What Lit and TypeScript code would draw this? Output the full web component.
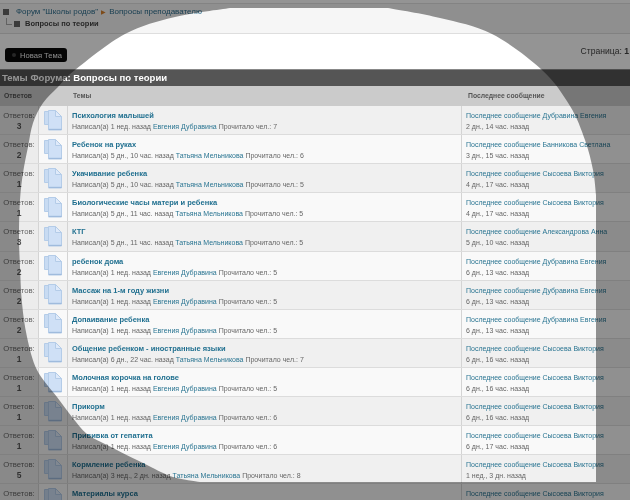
import { LitElement, html, css, svg } from "lit";
import { customElement } from "lit/decorators.js";

const D = "Евгения Дубравина";
const T = "Татьяна Мельникова";
const S = "Сысоева Виктория";
const E = "Дубравина Евгения";
const rows: [string, number, string, string, number, string, string][] = [
  ["Психология малышей", 3, "1 нед.", D, 7, E, "2 дн., 14 час."],
  ["Ребенок на руках", 2, "5 дн., 10 час.", T, 6, "Банникова Светлана", "3 дн., 15 час."],
  ["Укачивание ребенка", 1, "5 дн., 10 час.", T, 5, S, "4 дн., 17 час."],
  ["Биологические часы матери и ребенка", 1, "5 дн., 11 час.", T, 5, S, "4 дн., 17 час."],
  ["КТГ", 3, "5 дн., 11 час.", T, 5, "Александрова Анна", "5 дн., 10 час."],
  ["ребенок дома", 2, "1 нед.", D, 5, E, "6 дн., 13 час."],
  ["Массаж на 1-м году жизни", 2, "1 нед.", D, 5, E, "6 дн., 13 час."],
  ["Допаивание ребенка", 2, "1 нед.", D, 5, E, "6 дн., 13 час."],
  ["Общение ребенком - иностранные языки", 1, "6 дн., 22 час.", T, 7, S, "6 дн., 16 час."],
  ["Молочная корочка на голове", 1, "1 нед.", D, 5, S, "6 дн., 16 час."],
  ["Прикорм", 1, "1 нед.", D, 6, S, "6 дн., 16 час."],
  ["Прививка от гепатита", 1, "1 нед.", D, 6, S, "6 дн., 17 час."],
  ["Кормление ребенка", 5, "3 нед., 2 дн.", T, 8, S, "1 нед., 3 дн."],
  ["Материалы курса", 1, "3 нед., 2 дн.", T, 8, S, "1 нед., 3 дн."],
];

const pts: [number, number][] = [
  [388, 8], [440, 18], [492, 34], [542, 70], [570, 106], [585, 140], [593, 170], [596, 195],
];
const leftPts: [number, number][] = [
  [200, 482], [173, 477], [147, 465], [107, 445], [87, 434], [72, 417], [57, 397], [37, 370], [27, 337],
  [22, 303], [20, 267], [19, 235], [20, 200], [23, 173], [28, 147], [33, 123], [43, 103], [58, 87],
  [75, 70], [125, 34], [175, 17], [230, 8],
];
function spline(p: [number, number][]) {
  let d = "";
  for (let i = 0; i < p.length - 1; i++) {
    const a = p[Math.max(0, i - 1)], b = p[i], c = p[i + 1], e = p[Math.min(p.length - 1, i + 2)];
    d += `C${b[0] + (c[0] - a[0]) / 6} ${b[1] + (c[1] - a[1]) / 6} ${c[0] - (e[0] - b[0]) / 6} ${c[1] - (e[1] - b[1]) / 6} ${c[0]} ${c[1]}`;
  }
  return d;
}
const hole = `M230 8H388${spline(pts)}V482H200${spline(leftPts)}Z`;

const docIcon = svg`<svg class="doc" viewBox="0 0 18 21" width="18" height="21">
  <path d="M.5 1.5h8v13h-8z" fill="#c8dbf2" stroke="#b4cce8"/>
  <path d="M4.5.5h7l6 6v13.500h-13z" fill="#cfe0f6" stroke="#b4cce8"/>
  <path d="M11.500.5v6h6z" fill="#dfeafa" stroke="#b4cce8"/>
  <path d="M5 18.800h12.500v1.200h-12.500z" fill="#9fbbdd"/>
</svg>`;

@customElement("app-root")
export class AppRoot extends LitElement {
  static styles = css`
    :host { display: block; position: relative; width: 630px; height: 500px; overflow: hidden; background: #fff; font-family: "Liberation Sans", Arial, sans-serif; color: #555; }
    .page { filter: blur(0.45px); }
    .crumbs { margin-top: 3px; height: 31px; box-sizing: border-box; border-top: 1px solid #e2e2e2; border-bottom: 1px solid #dedede; background: #f6f6f6; padding: 2px 3px 0 3px; font-size: 8px; line-height: 12px; }
    .crumb-line { display: flex; align-items: center; gap: 3px; height: 12px; }
    .crumb-line.sub { padding-left: 3px; font-weight: bold; color: #444; font-size: 7.5px; }
    .crumb-line a { color: #2f6f8f; }
    .sep { color: #d9822b; font-size: 6px; }
    .sq { width: 6px; height: 6px; background: #666; margin-right: 4px; }
    .sub .sq { margin-right: 2px; }
    .elbow { width: 5px; height: 6px; border-left: 1px solid #aaa; border-bottom: 1px solid #aaa; margin-top: -6px; margin-right: -1px; }
    .toolbar { height: 35px; display: flex; align-items: center; justify-content: space-between; padding: 0 1px 0 5px; }
    .btn { display: flex; align-items: center; gap: 4px; box-sizing: border-box; height: 14px; width: 62px; padding-left: 7px; margin-top: 7px; background: #0a0a0a; border-radius: 3px; color: #eee; font-size: 7.6px; white-space: nowrap; }
    .btn i { width: 4px; height: 4px; border-radius: 50%; background: #444; }
    .pager { font-size: 8.6px; color: #444; margin-top: -1px; }
    .title { height: 17px; box-sizing: border-box; border-top: 1px solid #888; background: #555; color: #fff; font-weight: bold; font-size: 9.55px; line-height: 16px; padding-left: 2px; }
    .grid-row { display: grid; grid-template-columns: 39px 29px 394px 1fr; }
    .head { height: 20px; background: #cbcbcb; font-size: 6.8px; font-weight: bold; color: #555; line-height: 20px; }
    .head > div:first-child { padding-left: 4px; }
    .head > div:nth-child(3) { padding-left: 5px; }
    .head > div:nth-child(4) { padding-left: 6px; }
    .row { height: 29.12px; box-sizing: border-box; border-bottom: 1px solid #dcdcdc; background: #f9f9f9; font-size: 7px; }
    .row.alt { background: #f0f0f0; }
    .row > div { border-right: 1px solid #d4d4d4; min-width: 0; }
    .row > div:last-child { border-right: none; }
    .count { background: #ececec; text-align: center; font-size: 7.7px; line-height: 11px; padding-top: 4px; color: #666; }
    .count b { display: block; font-size: 8.5px; color: #555; }
    .icon { display: flex; align-items: center; justify-content: center; }
    .doc { display: block; }
    .topic { padding: 5px 0 0 4px; white-space: nowrap; }
    .topic a.name { display: block; color: #1f6f8f; font-weight: bold; font-size: 7.5px; line-height: 10px; margin-bottom: 1px; }
    .meta { color: #666; line-height: 10px; }
    .meta a, .last a { color: #2a7592; }
    .last { padding: 5px 0 0 4px; white-space: nowrap; line-height: 10px; color: #666; }
    .last span { display: block; margin-top: 1px; line-height: 10px; }
    .shade { position: absolute; inset: 0; width: 630px; height: 500px; pointer-events: none; }
  `;

  render() {
    return html`
      <div class="page">
        <div class="crumbs">
          <div class="crumb-line"><span class="sq"></span><a>Форум "Школы родов"</a><span class="sep">▶</span><a>Вопросы преподавателю</a></div>
          <div class="crumb-line sub"><span class="elbow"></span><span class="sq"></span><span>Вопросы по теории</span></div>
        </div>
        <div class="toolbar">
          <div class="btn"><i></i><span>Новая Тема</span></div>
          <div class="pager">Страница: <b>1</b></div>
        </div>
        <div class="title">Темы Форума: Вопросы по теории</div>
        <div class="grid-row head"><div>Ответов</div><div></div><div>Темы</div><div>Последнее сообщение</div></div>
        ${rows.map(
          (r, i) => html`<div class="grid-row row ${i % 2 ? "" : "alt"}">
            <div class="count">Ответов:<b>${r[1]}</b></div>
            <div class="icon">${docIcon}</div>
            <div class="topic"><a class="name">${r[0]}</a><div class="meta">Написал(а) ${r[2]} назад <a>${r[3]}</a> Прочитало чел.: ${r[4]}</div></div>
            <div class="last"><a>Последнее сообщение ${r[5]}</a><span>${r[6]} назад</span></div>
          </div>`
        )}
      </div>
      <svg class="shade" viewBox="0 0 630 500">
        <path fill="#000" fill-opacity=".42" fill-rule="evenodd" d="M0 0H630V500H0Z ${hole}"/>
      </svg>
    `;
  }
}
